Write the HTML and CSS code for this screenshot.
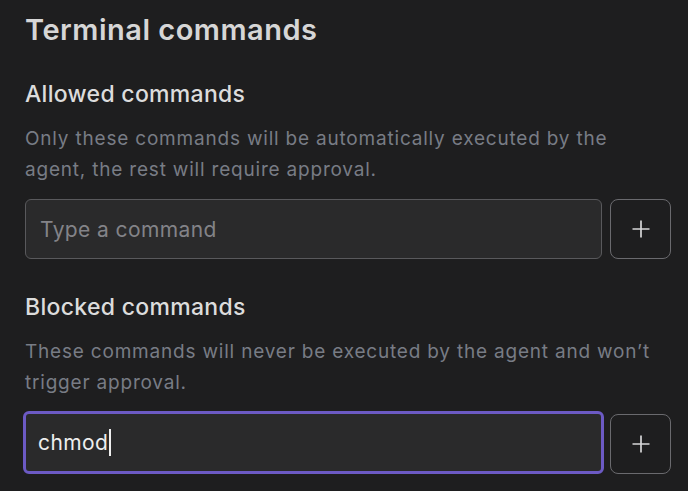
FILE: index.html
```html
<!DOCTYPE html>
<html lang="en">
<head>
<meta charset="utf-8">
<title>Terminal commands</title>
<link rel="stylesheet" href="styles.css">
</head>
<body>
<main class="panel">
  <h1 class="title">Terminal commands</h1>

  <section class="group">
    <h2 class="heading">Allowed commands</h2>
    <p class="desc">Only these commands will be automatically executed by the agent, the rest will require approval.</p>
    <div class="row">
      <div class="field"><span class="placeholder">Type a command</span></div>
      <button class="add" type="button" aria-label="Add">
        <svg width="20" height="20" viewBox="0 0 20 20"><path d="M10 1.5v17M1.5 10h17" stroke="#d6d6d8" stroke-width="1.7" fill="none"/></svg>
      </button>
    </div>
  </section>

  <section class="group">
    <h2 class="heading">Blocked commands</h2>
    <p class="desc">These commands will never be executed by the agent and won’t trigger approval.</p>
    <div class="row">
      <div class="field focused"><span class="value">chmod</span><span class="caret"></span></div>
      <button class="add" type="button" aria-label="Add">
        <svg width="20" height="20" viewBox="0 0 20 20"><path d="M10 1.5v17M1.5 10h17" stroke="#d6d6d8" stroke-width="1.7" fill="none"/></svg>
      </button>
    </div>
  </section>
</main>
</body>
</html>
```

FILE: styles.css
```css
html, body {
  margin: 0;
  padding: 0;
  background: #1e1e1f;
}
body {
  font-family: Inter, "Noto Sans", "Liberation Sans", sans-serif;
  width: 688px;
  height: 491px;
  overflow: hidden;
}
.panel {
  padding: 12px 17px 0 25px;
}
.title {
  margin: 0;
  font-size: 29px;
  line-height: 36px;
  font-weight: 600;
  letter-spacing: 0.5px;
  color: #d6d6d6;
}
.group {
  margin-top: 33px;
}
.group + .group {
  margin-top: 35px;
}
.heading {
  margin: 0;
  font-size: 23px;
  line-height: 26px;
  font-weight: 500;
  letter-spacing: 0.3px;
  color: #dcdcdc;
}
.desc {
  margin: 16px 0 0;
  max-width: 636px;
  font-size: 19px;
  line-height: 31px;
  color: #787c85;
  letter-spacing: 0.8px;
}
.row {
  display: flex;
  align-items: flex-end;
  gap: 8px;
  margin-top: 14px;
}
.field {
  flex: 1;
  height: 60px;
  box-sizing: border-box;
  border: 1.5px solid #59595c;
  border-radius: 6px;
  background: #2a2a2b;
  display: flex;
  align-items: center;
  padding-left: 14px;
  font-size: 21px;
}
.placeholder {
  color: #838388;
  letter-spacing: 0.4px;
}
.field.focused {
  border: 3px solid #6c5ac4;
  padding-left: 12px;
  margin: -1px -2px 0 -2px;
  height: 63px;
}
.value {
  color: #eeeeee;
  letter-spacing: 0.4px;
}
.caret {
  display: inline-block;
  width: 1.5px;
  height: 27px;
  background: #eeeeee;
  margin-left: 1px;
}
.add {
  width: 61px;
  height: 60px;
  box-sizing: border-box;
  border: 1.5px solid #6a6a6e;
  border-radius: 8px;
  background: #1e1e1f;
  display: flex;
  align-items: center;
  justify-content: center;
  padding: 0;
}
```
